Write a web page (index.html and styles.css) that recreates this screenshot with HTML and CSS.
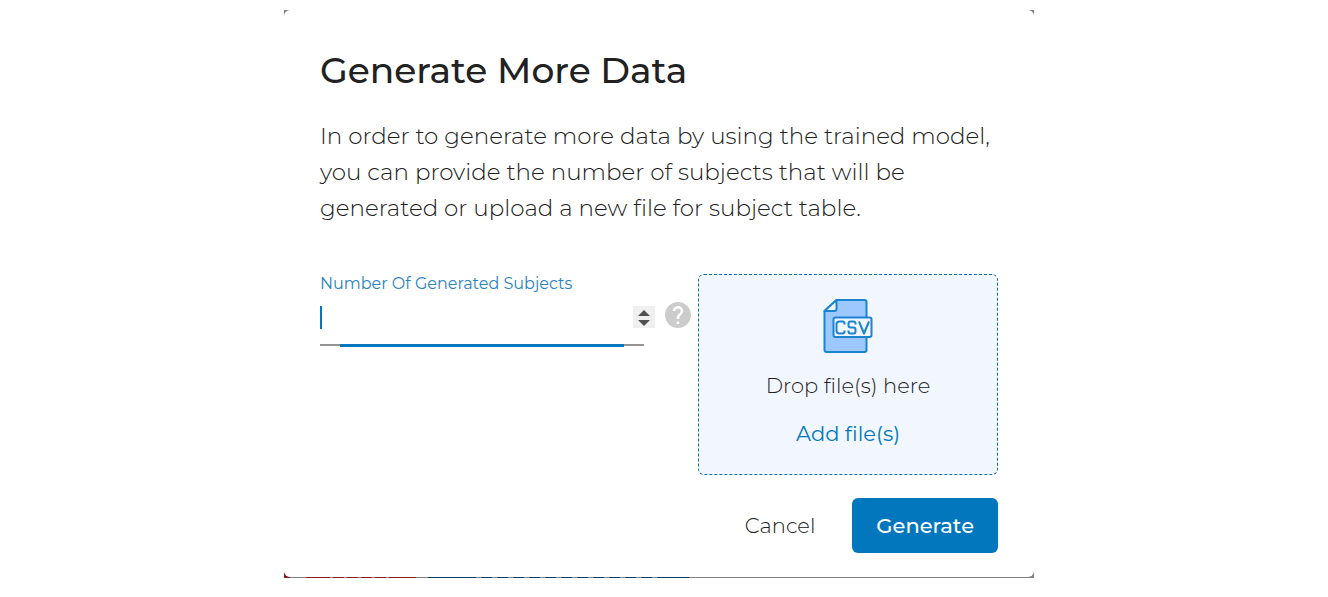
FILE: index.html
```html
<!DOCTYPE html>
<html lang="en">
<head>
<meta charset="utf-8">
<meta name="viewport" content="width=device-width, initial-scale=1">
<title>Generate More Data</title>
<link rel="stylesheet" href="styles.css">
</head>
<body>
<main class="backdrop">
  <form class="dialog" role="dialog" aria-labelledby="dialog-title">
    <h1 class="title" id="dialog-title">Generate More Data</h1>
    <p class="description">In order to generate more data by using the trained model, you can provide the number of subjects that will be generated or upload a new file for subject table.</p>
    <div class="options">
      <div class="count">
        <div class="field">
          <label class="field-label" for="subjects">Number Of Generated Subjects</label>
          <input class="field-input" id="subjects" type="number" min="1">
          <div class="stepper">
            <button class="step" type="button" aria-label="Increase"><svg class="arrow" viewBox="0 0 12 6"><path d="M6 0l6 6H0z"/></svg></button>
            <button class="step" type="button" aria-label="Decrease"><svg class="arrow" viewBox="0 0 12 6"><path d="M0 0h12L6 6z"/></svg></button>
          </div>
        </div>
        <button class="help" type="button" aria-label="Help">
          <svg class="help-icon" viewBox="2 2 20 20"><path d="M12 2C6.48 2 2 6.48 2 12s4.480 10 10 10 10-4.480 10-10S17.520 2 12 2zm1 17h-2v-2h2v2zm2.070-7.750l-.9.920C13.450 12.900 13 13.500 13 15h-2v-.5c0-1.100.45-2.100 1.170-2.830l1.240-1.260c.37-.36.59-.86.59-1.410 0-1.100-.9-2-2-2s-2 .9-2 2H8c0-2.210 1.790-4 4-4s4 1.790 4 4c0 .88-.36 1.680-.93 2.250z"/></svg>
        </button>
      </div>
      <div class="dropzone">
        <svg class="csv-icon" viewBox="0 0 50 54" aria-hidden="true">
          <path class="sheet" d="M13.500 1H41.500q2 0 2 2v48q0 2-2 2H3.500q-2 0-2-2V12z"/>
          <path class="fold" d="M13.500 1v9q0 2-2 2H1.500z"/>
          <rect class="tag" x="10.500" y="18.500" width="38" height="19.500" rx="2"/>
          <path class="mark" d="M21.500 25.500v-1q0-2-2-2h-3q-3 0-3 3v6q0 3 3 3h3q2 0 2-2v-1M32.500 25.500v-1q0-2-2-2h-3q-2 0-2 2v2q0 2 2 2h3q2 0 2 2v2q0 2-2 2h-3q-2 0-2-2v-1M36 22.500l5 12 5-12"/>
        </svg>
        <p class="drop-text">Drop file(s) here</p>
        <button class="add" type="button">Add file(s)</button>
      </div>
    </div>
    <div class="actions">
      <button class="cancel" type="button">Cancel</button>
      <button class="generate" type="submit">Generate</button>
    </div>
  </form>
</main>
</body>
</html>
```
FILE: styles.css
```css
* { box-sizing: border-box; }

body {
  margin: 0;
  padding: 10px 26px 10px 16px;
  background: #fff;
  color: #212121;
  font-family: Montserrat, Inter, "Open Sans", sans-serif;
  font-weight: 300;
  font-variant-ligatures: none;
}

button {
  padding: 0;
  border: 0;
  background: none;
  color: inherit;
  font: inherit;
  font-variant-ligatures: none;
  cursor: pointer;
}

.backdrop {
  max-width: 750px;
  margin: 0 auto;
  padding-bottom: 1px;
  background:
    linear-gradient(45deg, #8b1a1a 50%, transparent 50%) left bottom / 6px 6px no-repeat,
    repeating-linear-gradient(90deg, transparent 0 6px, #808080 6px 9px, transparent 9px 14px) 40px bottom / 66px 1px no-repeat,
    repeating-linear-gradient(90deg, transparent 0 6px, #808080 6px 11px, transparent 11px 16px) 186px bottom / 192px 1px no-repeat,
    linear-gradient(90deg, #808080 22px, #8b1a1a 22px 132px, #808080 132px 144px, #003c60 144px 405px, #808080 405px) left bottom / 100% 1px no-repeat,
    #808080;
}

.dialog {
  padding: 36px 36px 24px;
  border-radius: 6px;
  background: #fff;
}

.title {
  margin: 0;
  font-size: 36px;
  font-weight: 500;
  line-height: 48px;
}

.description {
  margin: 24px 0 48px;
  font-size: 23px;
  line-height: 36px;
}

.options {
  display: flex;
  flex-wrap: wrap;
  justify-content: space-between;
}

.count {
  display: flex;
  flex: 1 1 300px;
  align-items: flex-start;
}

.field {
  position: relative;
  flex: 0 1 324px;
  height: 73px;
  background:
    linear-gradient(#0277bd, #0277bd) center bottom / calc(100% - 40px) 3px no-repeat,
    linear-gradient(#949494, #949494) left 0 bottom 1px / 100% 2px no-repeat;
}

.field-label {
  display: block;
  color: #2b83bd;
  font-size: 16px;
  font-weight: 400;
  line-height: 20px;
}

.field-input {
  display: block;
  width: 100%;
  height: 23px;
  margin-top: 12px;
  padding: 0 24px 0 4px;
  border: 0;
  outline: 0;
  background: linear-gradient(#0277bd, #0277bd) left / 2px 100% no-repeat;
  color: inherit;
  font: inherit;
  font-size: 20px;
  appearance: textfield;
}

.stepper {
  position: absolute;
  top: 32px;
  right: -11px;
  display: flex;
  flex-direction: column;
  gap: 4px;
  width: 22px;
  height: 22px;
  padding: 4px 0 3px;
  background: #f0f0f0;
}

.step {
  display: flex;
  flex: 1;
  align-items: center;
  justify-content: center;
}

.arrow {
  width: 12px;
  height: 6px;
  fill: #505050;
}

.help {
  margin: 28px 0 0 21px;
  line-height: 0;
}

.help-icon {
  width: 26px;
  height: 26px;
  fill: #ccc;
}

.dropzone {
  display: flex;
  flex: 0 1 300px;
  flex-direction: column;
  align-items: center;
  padding: 24px 16px;
  border: 1px dashed #0b6fb8;
  border-radius: 6px;
  background: #f1f6ff;
  font-size: 21px;
  line-height: 24px;
}

.csv-icon {
  width: 50px;
  height: 54px;
  fill: none;
  stroke: #1a84d2;
  stroke-width: 2;
  stroke-linejoin: round;
}

.sheet { fill: #9cc8ff; }
.fold, .tag { fill: #f1f6ff; }

.drop-text { margin: 21px 0 24px; }

.add {
  margin-bottom: 4px;
  color: #0277bd;
  font-weight: 400;
  line-height: 24px;
}

.actions {
  display: flex;
  align-items: center;
  justify-content: flex-end;
  gap: 13px;
  margin-top: 23px;
  font-size: 21px;
}

.cancel {
  height: 55px;
  padding: 0 24px;
}

.generate {
  height: 55px;
  padding: 0 24px;
  border-radius: 6px;
  background: #0277bd;
  color: #fff;
  font-weight: 500;
}
```
